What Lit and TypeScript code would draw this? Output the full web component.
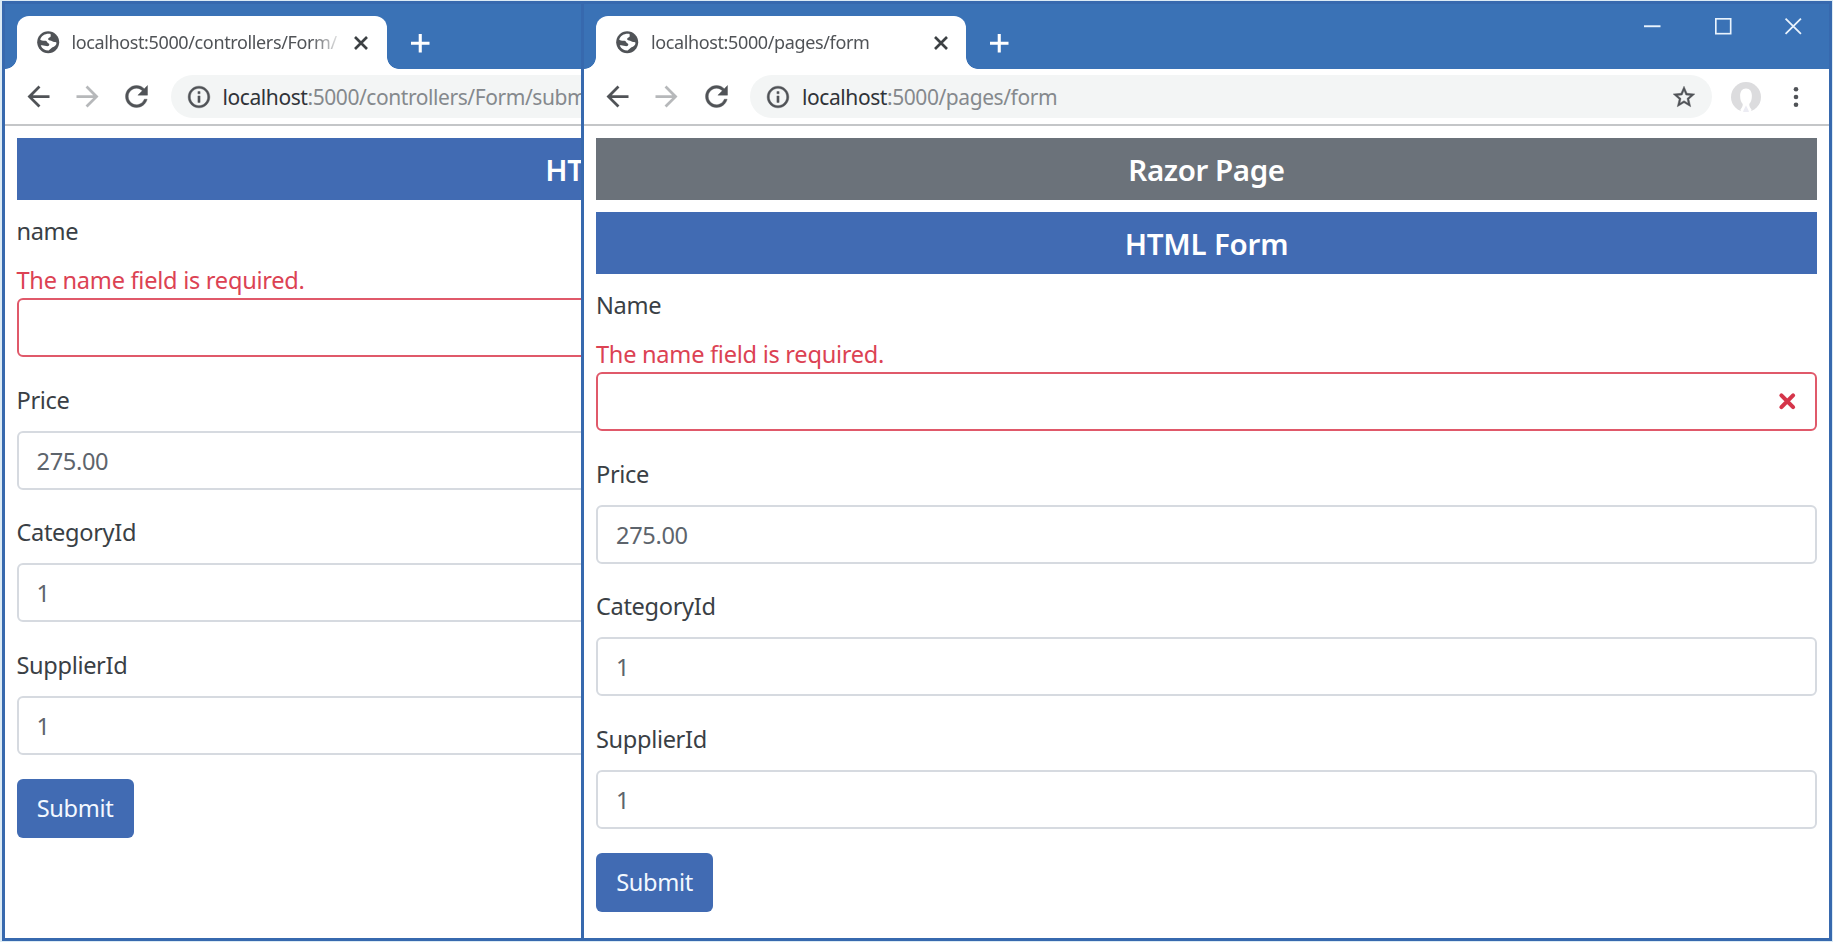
import { LitElement, html, svg, css, nothing } from "lit";
import { customElement, property } from "lit/decorators.js";

interface Field {
  label: string;
  value: string;
  error?: string;
}

const icons = {
  globe: svg`<circle cx="12" cy="12" r="10"/><path d="M14.300 4.600C10.500 3.600 6 5.600 4.700 9.600c1.500 1.300 3.300 1.300 4.900 1.100 1.200 0 1.300 1.700 2.400 2.200 1.500.5 1.200 1.900.1 2.600-1.900.5-4.600-1.300-6.900-.6 1.300 3 4.200 4.800 7.200 4.700 1.600-.9 2.200-2.300 3.500-2.900 1.700-.8 3.600-1.900 3.700-4.300-1.300-.9-2.800-.3-4-1.200-1-.9-2.700-.6-3.600-1.700-.5-1.500 1.700-1.500 2.200-2.700.4-.8-.3-1.500.1-2.200z" fill="#fff"/>`,
  back: svg`<path d="M20 11H7.83l5.59-5.59L12 4l-8 8 8 8 1.41-1.41L7.83 13H20v-2z"/>`,
  forward: svg`<path d="M12 4l-1.41 1.41L16.17 11H4v2h12.17l-5.58 5.59L12 20l8-8z"/>`,
  reload: svg`<path d="M17.65 6.35C16.2 4.9 14.21 4 12 4c-4.42 0-7.99 3.58-7.99 8s3.57 8 7.99 8c3.73 0 6.84-2.55 7.73-6h-2.08c-.82 2.33-3.04 4-5.65 4-3.31 0-6-2.69-6-6s2.69-6 6-6c1.66 0 3.14.69 4.22 1.78L13 11h7V4l-2.35 2.35z" stroke="currentColor" stroke-width=".3"/>`,
  info: svg`<path d="M11 7h2v2h-2zm0 4h2v6h-2zm1-9C6.48 2 2 6.48 2 12s4.48 10 10 10 10-4.48 10-10S17.52 2 12 2zm0 18c-4.41 0-8-3.59-8-8s3.59-8 8-8 8 3.59 8 8-3.59 8-8 8z" stroke="currentColor" stroke-width=".4"/>`,
  star: svg`<path d="M22 9.24l-7.19-.62L12 2 9.19 8.63 2 9.24l5.46 4.73L5.82 21 12 17.27 18.18 21l-1.63-7.03L22 9.24zM12 15.4l-3.76 2.27 1-4.28-3.32-2.88 4.38-.38L12 6.1l1.71 4.04 4.38.38-3.32 2.88 1 4.28L12 15.4z" stroke="currentColor" stroke-width=".4"/>`,
  avatar: svg`<circle cx="12" cy="12" r="12" fill="#dcdcde"/><path d="M12 5.200c-3.200 0-4.700 2.500-4.700 5.800 0 3 .8 5.300 2.100 6.600.1 1.700-.7 3.100-1.900 4.500l1 2.400h7l1-2.400c-1.200-1.400-2-2.800-1.900-4.500 1.300-1.300 2.100-3.600 2.100-6.600 0-3.300-1.500-5.800-4.700-5.800z" fill="#fff"/><path d="M12 18.500 9.500 23.700A12 12 0 0 0 14.500 23.700z" fill="#ececf3"/>`,
  dots: svg`<circle cx="12" cy="4.300" r="2.300"/><circle cx="12" cy="12" r="2.300"/><circle cx="12" cy="19.700" r="2.300"/>`,
  cross: svg`<path d="M3 3 21 21M21 3 3 21" fill="none" stroke="currentColor" stroke-width="4"/>`,
  plus: svg`<path d="M12 0V24M0 12H24" fill="none" stroke="currentColor" stroke-width="4"/>`,
  minimize: svg`<path d="M0 12H24" fill="none" stroke="currentColor" stroke-width="2.800"/>`,
  maximize: svg`<rect x="1.200" y="1.200" width="21.600" height="21.600" fill="none" stroke="currentColor" stroke-width="2.400"/>`,
  close: svg`<path d="M.8.8 23.200 23.200M23.200.8.8 23.200" fill="none" stroke="currentColor" stroke-width="2.600"/>`,
  invalid: svg`<path d="M3.500 3.500 20.500 20.500M20.500 3.500 3.500 20.500" fill="none" stroke="currentColor" stroke-width="6" stroke-linecap="round"/>`,
};

const icon = (name: keyof typeof icons, cls: string) =>
  html`<svg class="icon ${cls}" viewBox="0 0 24 24" fill="currentColor" aria-hidden="true">${icons[name]}</svg>`;

@customElement("browser-window")
export class BrowserWindow extends LitElement {
  @property() tabTitle = "";
  @property() path = "";

  static styles = css`
    :host {
      display: flex;
      flex-direction: column;
      box-sizing: border-box;
      border: 3px solid #3769ae;
      background: #fff;
      overflow: hidden;
      font-family: "Noto Sans", "Open Sans", sans-serif;
    }
    .icon { display: block; flex: none; overflow: visible; }
    .strip {
      display: flex;
      height: 65px;
      flex: none;
      background: #3a72b6;
      align-items: flex-end;
      color: #fff;
    }
    .foot { width: 12px; height: 12px; flex: none; }
    .foot.left { background: radial-gradient(circle at 0 0, transparent 11.5px, #fff 12.2px); }
    .foot.right { background: radial-gradient(circle at 100% 0, transparent 11.5px, #fff 12.2px); }
    .tab {
      display: flex;
      align-items: center;
      box-sizing: border-box;
      width: 370px;
      height: 53px;
      padding: 0 17.500px 0 18px;
      border-radius: 12px 12px 0 0;
      background: #fff;
      color: #505357;
    }
    .globe { width: 26.400px; height: 26.400px; }
    .title {
      flex: 1;
      width: 0;
      margin: 0 11px 2px 10.500px;
      font-size: 18px;
      letter-spacing: -0.37px;
      line-height: 24px;
      white-space: nowrap;
      overflow: hidden;
      -webkit-mask-image: linear-gradient(90deg, #000 240px, transparent 272px);
      mask-image: linear-gradient(90deg, #000 240px, transparent 272px);
    }
    .cross { width: 16px; height: 16px; color: #3c4043; }
    .plus { width: 18.500px; height: 18.500px; margin: 0 auto 17px 12px; }
    .controls {
      display: flex;
      align-self: flex-start;
      gap: 54px;
      padding: 14px 27.500px 0 0;
      color: #e9f3fd;
    }
    .control { width: 16.500px; height: 16.500px; }
    .toolbar {
      display: flex;
      align-items: center;
      box-sizing: border-box;
      height: 57px;
      flex: none;
      padding: 0 29px 0 17px;
      border-bottom: 2px solid #c4c6c8;
      color: #505357;
    }
    .nav { width: 33px; height: 33px; margin-right: 16.300px; }
    .nav.last { margin-right: 17.500px; }
    .nav.faded { color: #b6b8ba; }
    .pill {
      display: flex;
      align-items: center;
      flex: 1;
      box-sizing: border-box;
      height: 43px;
      padding: 0 15px 0 15px;
      border-radius: 22px;
      background: #f3f5f5;
    }
    .small { width: 26px; height: 26px; }
    .url {
      flex: 1;
      margin-left: 11px;
      font-size: 21px;
      letter-spacing: -0.43px;
      line-height: 28px;
      white-space: nowrap;
      color: #85898d;
    }
    .host { color: #303338; }
    .avatar { width: 30px; height: 30px; margin: 0 31.500px 0 18.500px; }
    .dots { width: 24px; height: 24px; margin: 0 -8px; }
    .page { padding: 12px; }
  `;

  render() {
    return html`
      <div class="strip">
        <span class="foot left"></span>
        <div class="tab">
          ${icon("globe", "globe")}
          <span class="title">${this.tabTitle}</span>
          ${icon("cross", "cross")}
        </div>
        <span class="foot right"></span>
        ${icon("plus", "plus")}
        <div class="controls">
          ${icon("minimize", "control")}${icon("maximize", "control")}${icon("close", "control")}
        </div>
      </div>
      <div class="toolbar">
        ${icon("back", "nav")}${icon("forward", "nav faded")}${icon("reload", "nav last")}
        <div class="pill">
          ${icon("info", "small")}
          <span class="url"><span class="host">localhost</span>${this.path}</span>
          ${icon("star", "small")}
        </div>
        ${icon("avatar", "avatar")}${icon("dots", "dots")}
      </div>
      <div class="page"><slot></slot></div>
    `;
  }
}

@customElement("product-form")
export class ProductForm extends LitElement {
  @property({ attribute: false }) fields: Field[] = [];

  static styles = css`
    :host {
      display: block;
      padding-top: 12.900px;
      font-family: "Noto Sans", "Open Sans", sans-serif;
      font-size: 23.600px;
      letter-spacing: -0.35px;
      line-height: 37px;
      color: #3a3f45;
    }
    .group { margin-bottom: 24.500px; }
    .label { display: block; margin-bottom: 12.300px; }
    .error { display: block; margin-bottom: -1px; color: #dc4253; letter-spacing: -0.27px; }
    .group:not(:first-child) .label { margin-bottom: 12px; }
    .input {
      display: flex;
      align-items: center;
      justify-content: space-between;
      box-sizing: border-box;
      height: 59px;
      padding: 2px 20px 0 18px;
      border: 2px solid #d6dae0;
      border-radius: 6px;
      color: #5d646c;
    }
    .input.invalid { padding-top: 0; border-color: #e0596a; }
    .mark { display: block; width: 16.500px; height: 16.500px; margin-left: auto; color: #d5354a; overflow: visible; }
    .submit {
      display: inline-flex;
      align-items: center;
      justify-content: center;
      width: 117px;
      height: 59px;
      border: 0;
      border-radius: 6px;
      padding: 0;
      background: #416bb3;
      color: #f3f8ff;
      font: inherit;
      letter-spacing: inherit;
    }
  `;

  render() {
    return html`
      ${this.fields.map(
        (f) => html`
          <div class="group">
            <span class="label">${f.label}</span>
            ${f.error ? html`<span class="error">${f.error}</span>` : nothing}
            <div class="input ${f.error ? "invalid" : ""}">
              <span>${f.value}</span>
              ${f.error ? icon("invalid", "mark") : nothing}
            </div>
          </div>
        `
      )}
      <button class="submit">Submit</button>
    `;
  }
}

const fieldsFor = (nameLabel: string): Field[] => [
  { label: nameLabel, value: "", error: "The name field is required." },
  { label: "Price", value: "275.00" },
  { label: "CategoryId", value: "1" },
  { label: "SupplierId", value: "1" },
];

@customElement("app-root")
export class AppRoot extends LitElement {
  static styles = css`
    :host {
      display: block;
      position: relative;
      width: 1833px;
      height: 942px;
      overflow: hidden;
      background: #dcebf5;
      font-family: "Noto Sans", "Open Sans", sans-serif;
    }
    .window { position: absolute; top: 1px; width: 1251px; height: 940px; }
    .rear { left: 1.500px; }
    .front { left: 581px; }
    .banner {
      height: 62px;
      margin-bottom: 12px;
      background: #416bb3;
      color: #fff;
      font-size: 29.500px;
      font-weight: 600;
      line-height: 64px;
      letter-spacing: -0.4px;
      text-align: center;
    }
    .banner.gray { background: #6b727a; }
    .banner.last { margin-bottom: 0; letter-spacing: -0.2px; }
  `;

  render() {
    return html`
      <browser-window class="window rear" .tabTitle=${"localhost:5000/controllers/Form/"} .path=${":5000/controllers/Form/submit"}>
        <div class="banner last">HTML Form</div>
        <product-form .fields=${fieldsFor("name")}></product-form>
      </browser-window>
      <browser-window class="window front" .tabTitle=${"localhost:5000/pages/form"} .path=${":5000/pages/form"}>
        <div class="banner gray">Razor Page</div>
        <div class="banner last">HTML Form</div>
        <product-form .fields=${fieldsFor("Name")}></product-form>
      </browser-window>
    `;
  }
}
